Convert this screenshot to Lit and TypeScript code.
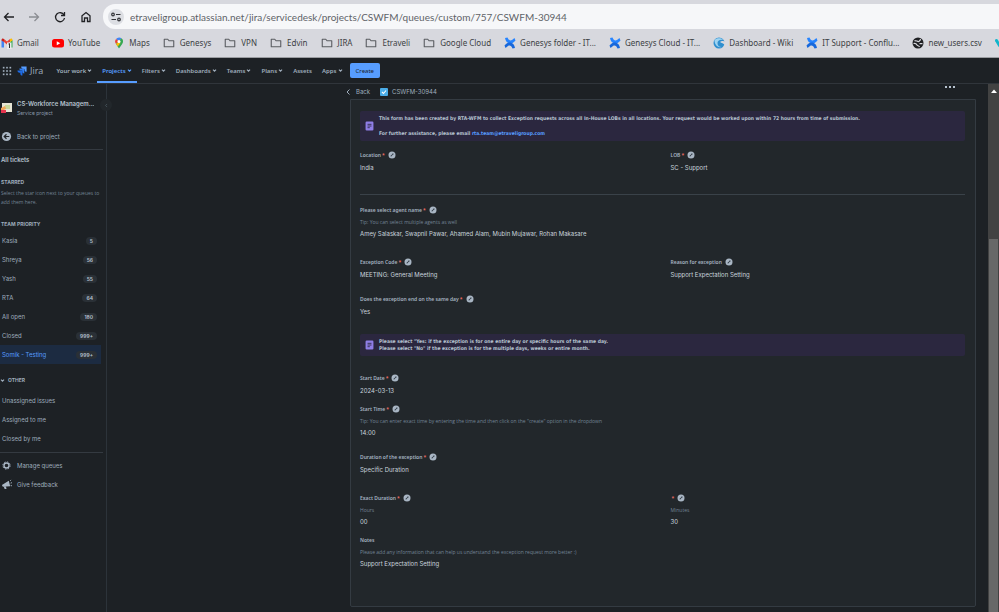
import { LitElement, html, css, svg, nothing } from "lit";
import { customElement, property } from "lit/decorators.js";
import { classMap } from "lit/directives/class-map.js";

const icon = (box: number, cls: string, body: unknown) =>
  html`<svg class="icon ${cls}" viewBox="0 0 ${box} ${box}" aria-hidden="true">${body}</svg>`;

const chevron = icon(8, "i5", svg`<path d="M1.500 2.500 4 5l2.500-2.500" fill="none" stroke="currentColor" stroke-width="1.800"/>`);
const folder = icon(24, "i12", svg`<path d="M2.500 4.500h7l2.500 3h9.500v12h-19z" fill="none" stroke="#5b5d62" stroke-width="2.200" stroke-linejoin="round"/>`);
const confluence = icon(24, "i12", svg`
  <path d="M2 2l5-1c2 5 5 7 9 5l5-4 2 5c-4 5-8 7-12 6C6 12 3 8 2 2z" fill="#2684ff"/>
  <path d="M22 22l-5 1c-2-5-5-7-9-5l-5 4-2-5c4-5 8-7 12-6 5 1 8 5 9 11z" fill="#1868db"/>`);
const gmail = icon(24, "i12", svg`
  <path d="M1 21V6l5 4v11z" fill="#4285f4"/><path d="M18 21V10l5-4v15z" fill="#34a853"/>
  <path d="M6 10V4l6 5 6-5v6l-6 5z" fill="#ea4335"/><path d="M1 6c0-3 3-4 5-2v6L1 7z" fill="#c5221f"/>
  <path d="M18 4c2-2 5-1 5 2v1l-5 3z" fill="#fbbc04"/><rect x="12" y="11" width="9" height="13" fill="#e9eaec"/>
  <path d="M15 14l2-1v9" stroke="#333" stroke-width="2" fill="none"/>`);
const youtube = icon(24, "i12", svg`<rect x="0" y="4" width="24" height="17" rx="5" fill="#f00"/><path d="M9.500 8.500v8l7-4z" fill="#fff"/>`);
const maps = icon(24, "i12", svg`
  <path d="M12 1a8 8 0 0 0-6 3l6 5 5-6.500A8 8 0 0 0 12 1z" fill="#4285f4"/>
  <path d="M6 4c-3 4-2 7 0 10l6-5z" fill="#ea4335"/><path d="M17 2.500c4 3 4 8 1 12L12 23 6 14z" fill="#34a853"/>
  <path d="M6 14l6-5 3 3-5.500 7z" fill="#fbbc04"/><circle cx="12" cy="9" r="3" fill="#fff"/>`);
const wiki = icon(24, "i12", svg`
  <circle cx="12" cy="12" r="11" fill="#2f8fcf"/><path d="M3 6c5-5 13-5 18 0-7-2-12 1-12 6s3 8 8 8C9 22 3 15 3 6z" fill="#9ed4f2"/>
  <path d="M14 10c3-3 8-2 10 0v6c-3-3-7-4-10-6z" fill="#d7d8de"/>`);
const globe = icon(24, "i12", svg`
  <circle cx="12" cy="12" r="11" fill="#202124"/><path d="M5 7c4 0 5 2 8 2s2-4 5-4" stroke="#d7d8de" stroke-width="2.500" fill="none"/>
  <path d="M3 13c4-1 6 1 7 3s4 1 5 4M15 13h6" stroke="#d7d8de" stroke-width="2.500" fill="none"/>`);
const tail = icon(24, "i12", svg`<path d="M3 7l6 10" stroke="#12b5cb" stroke-width="6" stroke-linecap="round"/><path d="M13 17l5-9" stroke="#f29900" stroke-width="6" stroke-linecap="round"/>`);
const noEdit = html`<svg class="icon i8" viewBox="0 0 16 16" role="img" aria-label="Not editable">
  <circle cx="8" cy="8" r="7" fill="#a9b6c4"/><path d="M5 11l.6-2.400 4.200-4.200 1.800 1.800-4.200 4.200z" fill="#3f4a55"/>
  <path d="M4 4l8 8" stroke="#a9b6c4" stroke-width="1.200"/></svg>`;
const note = icon(16, "note", svg`<rect x="1" y="0" width="14" height="16" rx="2" fill="#8f7ee7"/><path d="M4.500 5h7M4.500 8h7M4.500 11h4" stroke="#2b273f" stroke-width="1.500"/>`);

const base = css`
  * { box-sizing: border-box; }
  a { color: inherit; text-decoration: none; }
  button { font: inherit; color: inherit; border: 0; padding: 0; background: none; display: flex; align-items: center; }
  p, h1, h2, ul, dl, dd, dt { margin: 0; padding: 0; font: inherit; list-style: none; }
  .icon { display: block; flex: none; }
  .i5 { width: 5px; height: 5px; }
  .i8 { width: 8px; height: 8px; }
  .i10 { width: 10px; height: 10px; }
  .i12 { width: 12px; height: 12px; }
`;

@customElement("browser-bar")
class BrowserBar extends LitElement {
  static styles = [base, css`
    :host { display: block; background: #d7d8de; color: #3c3f44; border-bottom: 1px solid #9b9da1; overflow: hidden; }
    .tools { display: flex; align-items: center; height: 33px; padding-left: 2px; }
    .tool { width: 25px; height: 24px; justify-content: center; margin-right: 1px; }
    .tool:first-child { width: 13px; margin-right: 6px; }
    .address { flex: 1; display: flex; align-items: center; gap: 6px; height: 25px; margin-left: 4px; padding-left: 5px; background: #f6f7f9; border-radius: 12px 0 0 12px; }
    .site { width: 16px; height: 16px; justify-content: center; border-radius: 8px; background: #dcdee3; flex: none; }
    input { flex: 1; min-width: 0; border: 0; padding: 0; background: none; color: #5f6368; outline: 0; font: 10px Lato, sans-serif; }
    .marks { display: flex; gap: 13px; height: 24px; padding: 0 0 5px 1px; font-size: 8px; white-space: nowrap; align-items: center; }
    .marks a { display: flex; align-items: center; gap: 4px; }
    .marks a.dir { gap: 5px; }
    .i12 { color: #202124; }
  `];
  marks: [unknown, string][] = [
    [gmail, "Gmail"], [youtube, "YouTube"], [maps, "Maps"], [folder, "Genesys"], [folder, "VPN"], [folder, "Edvin"],
    [folder, "JIRA"], [folder, "Etraveli"], [folder, "Google Cloud"], [confluence, "Genesys folder - IT..."],
    [confluence, "Genesys Cloud - IT..."], [wiki, "Dashboard - Wiki"], [confluence, "IT Support - Conflu..."],
    [globe, "new_users.csv"], [tail, ""],
  ];
  render() {
    const line = (d: string, color = "currentColor") =>
      icon(24, "i12", svg`<path d=${d} fill="none" stroke=${color} stroke-width="2.600"/>`);
    return html`
      <div class="tools">
        <button class="tool" aria-label="Back">${line("M22 12H4M11 4l-8 8 8 8")}</button>
        <button class="tool" aria-label="Forward">${line("M2 12h18M13 4l8 8-8 8", "#8b8d92")}</button>
        <button class="tool" aria-label="Reload">${line("M20 8a9 9 0 1 0 1 6M21 2v7h-7")}</button>
        <button class="tool" aria-label="Home">${line("M4 21V9.500L12 3l8 6.500V21h-5v-7H9v7z")}</button>
        <div class="address">
          <button class="site" aria-label="Site information">
            ${icon(24, "i12", svg`<g fill="none" stroke="#303236" stroke-width="2.400"><circle cx="6" cy="7" r="2.600"/><path d="M12 7h9M3 17h9"/><circle cx="18" cy="17" r="2.600"/></g>`)}
          </button>
          <input aria-label="Address" .value=${"etraveligroup.atlassian.net/jira/servicedesk/projects/CSWFM/queues/custom/757/CSWFM-30944"} />
        </div>
      </div>
      <nav class="marks" aria-label="Bookmarks">
        ${this.marks.map(([i, t]) => html`<a href="#" class=${classMap({ dir: i === folder })} aria-label=${t || "More"}>${i}${t}</a>`)}
      </nav>`;
  }
}

@customElement("jira-nav")
class JiraNav extends LitElement {
  static styles = [base, css`
    :host { display: flex; align-items: stretch; height: 26px; padding-left: 2px; background: #1d2125; border-bottom: 1px solid #30353b; color: #9fadbc; font-size: 6px; font-weight: 600; white-space: nowrap; }
    .brand { display: flex; align-items: center; gap: 3px; margin: 0 8px 0 5px; font: 9px "Open Sans", sans-serif; color: #9fadbc; }
    .item { display: flex; align-items: center; gap: 1px; padding: 2px 5px 0; border-bottom: 2px solid transparent; }
    .item.on { color: #579dff; border-color: #579dff; }
    .create { align-self: center; height: 15px; margin-left: 2px; padding: 0 6px; border-radius: 2px; background: #579dff; color: #1d2125; font-weight: 400; }
  `];
  render() {
    const items = ["Your work", "Projects", "Filters", "Dashboards", "Teams", "Plans", "Assets", "Apps"];
    return html`
      <button aria-label="Switch app">
        ${icon(12, "i10", svg`<g fill="#9fadbc">${[1, 5, 9].map((x) => [1, 5, 9].map((y) => svg`<rect x=${x} y=${y} width="2" height="2"/>`))}</g>`)}
      </button>
      <a class="brand" href="#">
        ${icon(24, "i10", svg`<path d="M10 1h13v13c-3 0-5-2-5-5V7h-3c-3 0-5-3-5-6z" fill="#579dff"/><path d="M5.500 6h12v12c-3 0-5-2-5-4v-3h-2c-3 0-5-2-5-5z" fill="#2f7df0"/><path d="M1 11h12v12c-3 0-5-2-5-4v-3H6c-3 0-5-2-5-5z" fill="#1d6ae5"/>`)}Jira
      </a>
      ${items.map((t) => html`<a href="#" class=${classMap({ item: true, on: t === "Projects" })}>${t}${t === "Assets" ? nothing : chevron}</a>`)}
      <button class="create">Create</button>`;
  }
}

@customElement("project-sidebar")
class ProjectSidebar extends LitElement {
  static styles = [base, css`
    :host { display: block; width: 107px; flex: none; border-right: 1px solid #2c333a; color: #9fadbc; font-size: 6px; position: relative; white-space: nowrap; }
    .project { display: flex; align-items: center; gap: 5px; padding: 15px 0 0; }
    .name { font-weight: 600; line-height: 10px; color: #b6c2cf; overflow: hidden; text-overflow: ellipsis; }
    .kind { font-size: 5px; line-height: 8px; color: #8c9bab; }
    .lead { display: flex; align-items: center; gap: 5px; height: 19px; padding-left: 1px; }
    .back { margin: 10px 0 3px; }
    .rule { height: 1px; width: 103px; background: #343a41; }
    .foot { margin: 4px 0 3px; }
    .all { display: block; padding: 4px 0 0 1px; line-height: 12px; font-weight: 600; color: #b6c2cf; }
    h2 { padding-left: 1px; margin-top: 12px; font-size: 5px; font-weight: 700; line-height: 8px; }
    .hint { padding: 3px 0 1px 1px; font: 5px "Open Sans", sans-serif; line-height: 9px; color: #738496; white-space: normal; }
    ul { padding-top: 3px; }
    .other + ul { padding-top: 7px; }
    .row { display: flex; align-items: center; justify-content: space-between; width: 101px; height: 19px; padding: 0 4px 0 2px; }
    .row.on { background: #1c2b41; color: #579dff; }
    .count { padding: 0 4px; border-radius: 4px; line-height: 8px; background: #2a3036; color: #b6c2cf; font-size: 5px; font-weight: 600; }
    .other { display: flex; align-items: center; gap: 3px; padding-left: 0; }
    .i11 { width: 11px; height: 11px; }
    .fold { position: absolute; right: -6px; top: 15px; width: 12px; height: 12px; border-radius: 6px; background: #22272b; justify-content: center; color: #596773; }
  `];
  render() {
    const queues = [["Kasia", "5"], ["Shreya", "56"], ["Yash", "55"], ["RTA", "64"], ["All open", "180"], ["Closed", "999+"], ["Somik - Testing", "999+"]];
    return html`
      <div class="project">
        ${icon(12, "i12", svg`<rect x="2" y="1" width="10" height="9" fill="#e6e4d4"/><rect x="5" y="3" width="5" height="4" fill="#c9d89c"/><path d="M1 6l4-2 1 3-5 2z" fill="#f2a65a"/><rect x="1" y="8" width="5" height="3" fill="#e5344e"/>`)}
        <div><h1 class="name">CS-Workforce Managem...</h1><p class="kind">Service project</p></div>
      </div>
      <a class="lead back" href="#">
        ${icon(24, "i11", svg`<circle cx="12" cy="12" r="10" fill="#a9b6c4"/><path d="M18 12H8M12 7l-5 5 5 5" stroke="#1d2125" stroke-width="2.600" fill="none"/>`)}Back to project
      </a>
      <div class="rule"></div>
      <a class="all" href="#">All tickets</a>
      <h2>STARRED</h2>
      <p class="hint">Select the star icon next to your queues to add them here.</p>
      <h2>TEAM PRIORITY</h2>
      <ul>${queues.map(([n, c]) => html`<li><a href="#" class=${classMap({ row: true, on: n.startsWith("Somik") })}>${n}<span class="count">${c}</span></a></li>`)}</ul>
      <h2 class="other">${chevron}OTHER</h2>
      <ul>${["Unassigned issues", "Assigned to me", "Closed by me"].map((n) => html`<li><a href="#" class="row">${n}</a></li>`)}</ul>
      <div class="rule foot"></div>
      <a class="lead" href="#">${icon(24, "i11", svg`<g fill="none" stroke="#a9b6c4"><circle cx="12" cy="12" r="5.500" stroke-width="3"/><circle cx="12" cy="12" r="8" stroke-width="2" stroke-dasharray="3.140 3.140"/></g>`)}Manage queues</a>
      <a class="lead" href="#">${icon(24, "i11", svg`<path d="M2 13l15-9 3 12-16 1zM6 17l5 0 1 5H8z" fill="#a9b6c4"/><path d="M20 4l2-2M21 9l3-1M21 14l3 1" stroke="#a9b6c4" stroke-width="2"/>`)}Give feedback</a>
      <button class="fold" aria-label="Collapse sidebar">${icon(8, "i5", svg`<path d="M5 1.500 2.500 4 5 6.500" fill="none" stroke="currentColor"/>`)}</button>`;
  }
}

@customElement("form-field")
class FormField extends LitElement {
  @property() label = "";
  @property() tip = "";
  @property() value = "";
  @property({ type: Boolean }) required = false;
  @property({ type: Boolean }) plain = false;
  static styles = [base, css`
    :host { display: block; line-height: 12px; }
    dt { display: flex; align-items: center; gap: 3px; height: 12px; font-family: "Noto Sans", sans-serif; font-size: 5px; font-weight: 600; color: #a6b3c1; }
    .star { color: #f87168; padding-left: 1px; }
    .tip { font-family: "Open Sans", sans-serif; font-size: 5px; color: #738496; }
    .value { font-size: 6px; color: #c9d3dd; }
    .lower { margin-top: 1px; }
  `];
  render() {
    return html`<dl>
      <dt><span>${this.label}${this.required ? html`<span class="star">*</span>` : nothing}</span>${this.plain ? nothing : noEdit}</dt>
      ${this.tip ? html`<dd class="tip">${this.tip}</dd>` : nothing}
      <dd class=${classMap({ value: true, lower: !this.tip })}>${this.value}</dd>
    </dl>`;
  }
}

@customElement("request-form")
class RequestForm extends LitElement {
  static styles = [base, css`
    :host { display: block; padding: 11px 10px 36px 9px; background: #22272b; border: 1px solid #343b42; border-radius: 0 0 2px 2px; }
    .banner { display: flex; align-items: center; gap: 5px; padding: 4px 5px; background: #2b273f; border-radius: 2px; color: #b6c2cf; font-family: "DejaVu Sans Condensed", "Noto Sans", sans-serif; font-size: 5px; font-weight: 700; line-height: 7px; }
    .note { width: 9px; height: 10px; }
    .link { color: #579dff; }
    .text p + p.apart { margin-top: 8px; }
    .row { display: grid; grid-template-columns: 1fr 1fr; gap: 16px; }
    .s { margin-top: 6px; }
    .m { margin-top: 12px; }
    .l { margin-top: 16px; }
    .xs { margin-top: 8px; }
    hr { height: 1px; border: 0; margin: 20px 0 9px; background: #3a4249; }
  `];
  render() {
    return html`
      <div class="banner">${note}<div class="text">
        <p>This form has been created by RTA-WFM to collect Exception requests across all In-House LOBs in all locations. Your request would be worked upon within 72 hours from time of submission.</p>
        <p class="apart">For further assistance, please email <a class="link" href="#">rta.team@etraveligroup.com</a></p>
      </div></div>
      <div class="row xs">
        <form-field label="Location" required value="India"></form-field>
        <form-field label="LOB" required value="SC - Support"></form-field>
      </div>
      <hr />
      <form-field label="Please select agent name" required tip="Tip: You can select multiple agents as well" value="Amey Salaskar, Swapnil Pawar, Ahamed Alam, Mubin Mujawar, Rohan Makasare"></form-field>
      <div class="row l">
        <form-field label="Exception Code" required value="MEETING: General Meeting"></form-field>
        <form-field label="Reason for exception" value="Support Expectation Setting"></form-field>
      </div>
      <form-field class="m" label="Does the exception end on the same day" required value="Yes"></form-field>
      <div class="banner l">${note}<div class="text">
        <p>Please select "Yes: if the exception is for one entire day or specific hours of the same day.</p>
        <p>Please select "No" if the exception is for the multiple days, weeks or entire month.</p>
      </div></div>
      <form-field class="l" label="Start Date" required value="2024-03-13"></form-field>
      <form-field class="s" label="Start Time" required tip='Tip: You can enter exact time by entering the time and then click on the "create" option in the dropdown' value="14:00"></form-field>
      <form-field class="m" label="Duration of the exception" required value="Specific Duration"></form-field>
      <div class="row l">
        <form-field label="Exact Duration" required tip="Hours" value="00"></form-field>
        <form-field required tip="Minutes" value="30"></form-field>
      </div>
      <form-field class="s" label="Notes" plain tip="Please add any information that can help us understand the exception request more better :)" value="Support Expectation Setting"></form-field>`;
  }
}

@customElement("app-root")
class AppRoot extends LitElement {
  static styles = [base, css`
    :host { display: flex; flex-direction: column; min-height: 100vh; background: #1d2125; font-family: "Noto Sans", "Open Sans", sans-serif; }
    .body { flex: 1; display: flex; align-items: stretch; font-family: Inter, "Noto Sans", sans-serif; }
    .gutter { flex: 3 1 0; }
    main { flex: 8 1 0; min-width: 0; padding: 0 12px 6px 0; color: #9fadbc; font-size: 6px; }
    .bar { display: flex; align-items: center; height: 15px; gap: 10px; }
    .crumb { display: flex; align-items: center; gap: 4px; }
    .more { margin: 0 21px 10px auto; width: 10px; }
    .sheet { margin-left: 6px; }
    .check { display: flex; align-items: center; gap: 4px; }
    .scroll { width: 11px; flex: none; display: flex; flex-direction: column; background: #424242; padding: 0 1px; }
    .up { height: 13px; display: flex; align-items: center; justify-content: center; }
    .thumb { flex: 1; background: #686868; margin-top: 142px; }
  `];
  render() {
    return html`
      <browser-bar></browser-bar>
      <jira-nav></jira-nav>
      <div class="body">
        <project-sidebar></project-sidebar>
        <div class="gutter"></div>
        <main>
          <div class="bar">
            <a class="crumb" href="#">${icon(8, "i8", svg`<path d="M5.500 1.500 3 4l2.500 2.500" fill="none" stroke="currentColor"/>`)}Back</a>
            <a class="check" href="#">${icon(16, "i8", svg`<rect width="16" height="16" rx="2" fill="#4bade8"/><path d="M4 8l3 3 5-6" stroke="#fff" stroke-width="2.200" fill="none"/>`)}CSWFM-30944</a>
            <button class="more" aria-label="More actions">${icon(10, "i10", svg`<g fill="#b6c2cf"><rect x="0" y="4" width="2" height="2"/><rect x="4" y="4" width="2" height="2"/><rect x="8" y="4" width="2" height="2"/></g>`)}</button>
          </div>
          <request-form class="sheet"></request-form>
        </main>
        <div class="scroll" aria-hidden="true">
          <div class="up">${icon(10, "i10", svg`<path d="M2 7l3-3.500L8 7z" fill="#fff"/>`)}</div>
          <div class="thumb"></div>
        </div>
      </div>`;
  }
}
